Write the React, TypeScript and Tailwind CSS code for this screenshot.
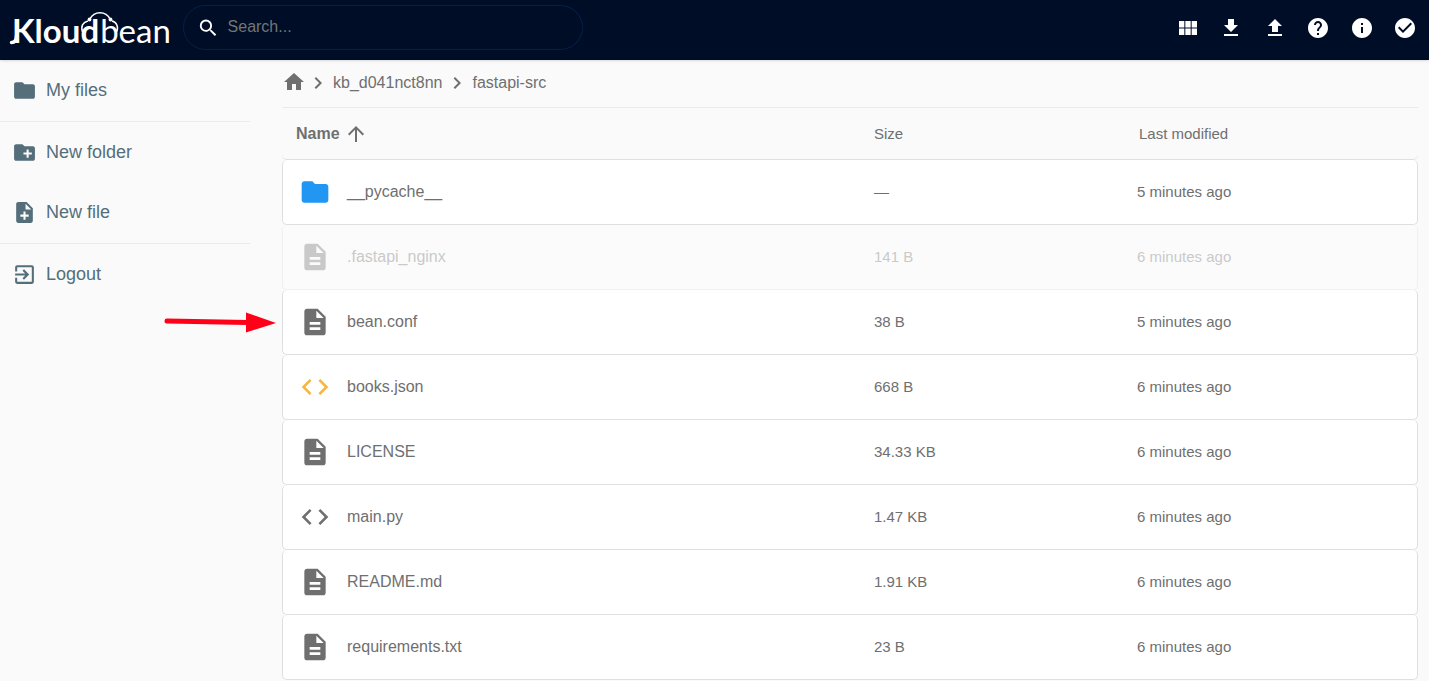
import React, { useState } from 'react';
import {
    MdArrowUpward,
    MdCheckCircle,
    MdChevronRight,
    MdCode,
    MdCreateNewFolder,
    MdDescription,
    MdExitToApp,
    MdFileDownload,
    MdFileUpload,
    MdFolder,
    MdHelp,
    MdHome,
    MdInfo,
    MdNoteAdd,
    MdSearch,
    MdViewModule,
} from 'react-icons/md';

type FileItem = {
    name: string;
    size: string;
    modified: string;
    icon: React.ElementType;
    color: string;
};

const GREY = 'text-[#6f6f6f]';

const files: FileItem[] = [
    { name: '__pycache__', size: '—', modified: '5 minutes ago', icon: MdFolder, color: 'text-[#2196f3]' },
    { name: '.fastapi_nginx', size: '141 B', modified: '6 minutes ago', icon: MdDescription, color: GREY },
    { name: 'bean.conf', size: '38 B', modified: '5 minutes ago', icon: MdDescription, color: GREY },
    { name: 'books.json', size: '668 B', modified: '6 minutes ago', icon: MdCode, color: 'text-[#f9b53c]' },
    { name: 'LICENSE', size: '34.33 KB', modified: '6 minutes ago', icon: MdDescription, color: GREY },
    { name: 'main.py', size: '1.47 KB', modified: '6 minutes ago', icon: MdCode, color: GREY },
    { name: 'README.md', size: '1.91 KB', modified: '6 minutes ago', icon: MdDescription, color: GREY },
    { name: 'requirements.txt', size: '23 B', modified: '6 minutes ago', icon: MdDescription, color: GREY },
];

const actions = [
    { label: 'Switch view', icon: MdViewModule },
    { label: 'Download', icon: MdFileDownload },
    { label: 'Upload', icon: MdFileUpload },
    { label: 'Help', icon: MdHelp },
    { label: 'Info', icon: MdInfo },
    { label: 'Select multiple', icon: MdCheckCircle },
];

const Logo: React.FC = () => (
    <a href="#home" className="relative flex w-[175px] shrink-0 gap-px self-start pl-3 font-['Lato',sans-serif] text-[33px] leading-[60px] text-white">
        <span className="font-bold">Kloud</span>
        <span>bean</span>
        {/* cloud outline above the letters and the foot of the K */}
        <svg className="absolute left-0 top-0" width="175" height="60" viewBox="0 0 175 60" fill="none" stroke="currentColor" strokeWidth="1.5">
            <path d="M82.5 32C80.500 26 83 22 88 21M90 19C94 10.500 106 10.500 110 19M112 21C116.500 22 119 27 116.500 32" />
            <circle cx="89.500" cy="19.500" r="1.900" fill="currentColor" stroke="none" />
            <circle cx="110.500" cy="19.500" r="1.900" fill="currentColor" stroke="none" />
            <path d="M16.500 36C16.500 40 15 42.500 11.500 42.500" strokeWidth="3.500" strokeLinecap="round" />
        </svg>
    </a>
);

const NavItem: React.FC<{ icon: React.ElementType; label: string }> = ({ icon: Icon, label }) => (
    <button type="button" className="flex h-[60px] w-full items-center gap-[9px] pl-3 text-left text-lg text-[#546e7a]">
        <Icon className="size-[25px]" />
        {label}
    </button>
);

const FileRow: React.FC<{ file: FileItem }> = ({ file }) => {
    const Icon = file.icon;
    const hidden = file.name.startsWith('.');

    return (
        <tr className={hidden ? 'opacity-35' : ''}>
            <td className="h-[65px] rounded-l-[5px] border-b border-l border-[#dfdfdf] bg-white p-0 pl-4">
                <a href={`#${file.name}`} className="flex items-center gap-4 text-base">
                    <Icon className={`size-8 ${file.color}`} />
                    {file.name}
                </a>
            </td>
            <td className="border-b border-[#dfdfdf] bg-white p-0">{file.size}</td>
            <td className="rounded-r-[5px] border-b border-r border-[#dfdfdf] bg-white p-0">{file.modified}</td>
        </tr>
    );
};

const App: React.FC = () => {
    const [query, setQuery] = useState('');

    return (
        <div className="min-h-screen bg-[#fafafa] font-['Liberation_Sans',Arial,sans-serif] text-[#6f6f6f]">
            <header className="flex h-[60px] items-center bg-[#000d27] pb-[5px] pr-3 shadow">
                <Logo />
                <label className="ml-2 flex h-[45px] w-[400px] items-center rounded-full border border-[#05204a] pl-[13px] text-white">
                    <MdSearch className="size-6" />
                    <input
                        type="text"
                        aria-label="Search"
                        placeholder="Search..."
                        value={query}
                        onChange={(e) => setQuery(e.target.value)}
                        className="w-full bg-transparent pb-0.5 pl-2 text-base outline-none placeholder:text-[#757575]"
                    />
                </label>
                <div className="ml-auto flex w-[241px] justify-between text-white">
                    {actions.map(({ label, icon: Icon }) => (
                        <button key={label} type="button" aria-label={label} title={label}>
                            <Icon className="size-6" />
                        </button>
                    ))}
                </div>
            </header>

            <div className="relative flex">
                <nav className="w-[250px] shrink-0">
                    <div className="border-b border-[#ebebeb] pb-px">
                        <NavItem icon={MdFolder} label="My files" />
                    </div>
                    <div className="border-b border-[#ebebeb] pb-px">
                        <NavItem icon={MdCreateNewFolder} label="New folder" />
                        <NavItem icon={MdNoteAdd} label="New file" />
                    </div>
                    <NavItem icon={MdExitToApp} label="Logout" />
                </nav>

                <main className="ml-8 mr-[11px] min-w-0 flex-1">
                    <div className="flex h-12 items-center border-b border-[#ebebeb] pb-0.5">
                        <a href="#home" aria-label="Home" className="pb-0.5">
                            <MdHome className="size-6" />
                        </a>
                        <MdChevronRight className="mr-[3px] size-6" />
                        <a href="#kb_d041nct8nn">kb_d041nct8nn</a>
                        <MdChevronRight className="mx-[3px] size-6" />
                        <a href="#fastapi-src">fastapi-src</a>
                    </div>

                    <table className="w-full table-fixed border-separate border-spacing-0 text-left text-[15px]">
                        <thead>
                            <tr>
                                <th scope="col" className="h-[52px] rounded-bl-[5px] border-b border-[#dfdfdf] p-0 pl-[14px] text-base font-bold">
                                    <button type="button" className="flex items-center gap-1">
                                        Name
                                        <MdArrowUpward className="size-6" />
                                    </button>
                                </th>
                                <th scope="col" className="w-[263px] border-b border-[#dfdfdf] p-0 pt-0.5 font-normal">
                                    <button type="button">Size</button>
                                </th>
                                <th scope="col" className="w-[281px] rounded-br-[5px] border-b border-[#dfdfdf] p-0 pl-0.5 pt-0.5 font-normal">
                                    <button type="button">Last modified</button>
                                </th>
                            </tr>
                        </thead>
                        <tbody>
                            {files.map((file) => (
                                <FileRow key={file.name} file={file} />
                            ))}
                        </tbody>
                    </table>
                </main>

                {/* Pointer to bean.conf */}
                <svg className="pointer-events-none absolute left-[164px] top-[250px]" width="114" height="24" viewBox="0 0 114 24">
                    <path d="M3 11L84 12.500" stroke="#ff0018" strokeWidth="5" strokeLinecap="round" />
                    <path d="M82 2.500L112 13L82 22.500Z" fill="#ff0018" />
                </svg>
            </div>
        </div>
    );
};

export default App;
